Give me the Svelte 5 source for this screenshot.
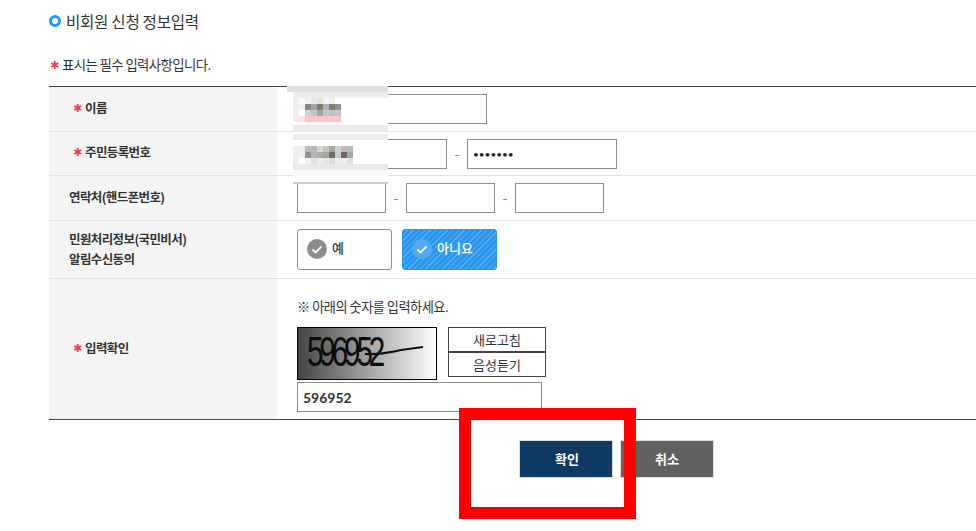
<script>
  const m1 = [
    ['#fafafa','#f0eef0','#eceae8','#e6e2de','#f2f2f4','#eef0f0','#ffffff'],
    ['#f4f0f0','#8a8a82','#a4a4a0','#807c78','#b0b4b8','#857d6c','#8a949c'],
    ['#ffffff','#d0d0ce','#c0c4c6','#a8a49a','#c2c6ca','#bcc0c4','#c0c4c8'],
    ['#ffe0e0','#ffc4c4','#ffc4c4','#ffc4c4','#ffc4c4','#ffc4c4','#ffc4c4']
  ].flat();
  const m2 = [
    ['#f0ece4','#b4bcc0','#bcb8b8','#d8d8d4','#c4c4bc','#a4a4a4','#ccd0d4','#bcb8b8','#b4bcc0'],
    ['#f4f0ec','#8c9498','#b8b4b4','#a8b0b0','#a8a498','#6c6c70','#c8ccd0','#706868','#a4acb0'],
    ['#ffffff','#f0f2f4','#e4e0e0','#eceeee','#e8e8e8','#dcdcdc','#eceeee','#f0f0f0','#dde0e2']
  ].flat();
</script>

<main class="page">
  <h2 class="title"><span class="ring"></span>비회원 신청 정보입력</h2>
  <p class="note"><span class="star">✱</span>표시는 필수 입력사항입니다.</p>

  <table>
    <tbody>
      <tr class="r1">
        <th class="req"><span class="star">✱</span>이름</th>
        <td><input class="w190" /></td>
      </tr>
      <tr class="r2">
        <th class="req"><span class="star">✱</span>주민등록번호</th>
        <td>
          <div class="fields wide">
            <input class="w150" /><span class="dash">-</span><input class="w150 pw" value="•••••••" />
          </div>
        </td>
      </tr>
      <tr class="r3">
        <th>연락처(핸드폰번호)</th>
        <td>
          <div class="fields">
            <input class="w89" /><span class="dash">-</span><input class="w89" /><span class="dash">-</span><input class="w89" />
          </div>
        </td>
      </tr>
      <tr class="r4">
        <th class="two">민원처리정보(국민비서)<br />알림수신동의</th>
        <td>
          <div class="radios">
            <div class="radio">
              <svg width="20" height="20" viewBox="0 0 20 20"><circle cx="10" cy="10" r="10" fill="#8c8c8c" /><path d="M5.5 10.5l3 3 6-6" fill="none" stroke="#fff" stroke-width="1.8" /></svg>
              <span>예</span>
            </div>
            <div class="radio on">
              <svg width="20" height="20" viewBox="0 0 20 20"><circle cx="10" cy="10" r="10" fill="#52aaf6" /><path d="M5.5 10.5l3 3 6-6" fill="none" stroke="#fff" stroke-width="1.8" /></svg>
              <span>아니요</span>
            </div>
          </div>
        </td>
      </tr>
      <tr class="r5">
        <th class="req"><span class="star">✱</span>입력확인</th>
        <td>
          <p class="hint">※ 아래의 숫자를 입력하세요.</p>
          <div class="captcha-row">
            <div class="captcha">
              <span class="digits">596952</span>
              <svg class="scribble" width="140" height="53" viewBox="0 0 140 53"><path d="M68 27c14 1 24-1 36-4l22-3" fill="none" stroke="#111" stroke-width="2.2" /></svg>
            </div>
            <div class="cap-btns">
              <button>새로고침</button>
              <button>음성듣기</button>
            </div>
          </div>
          <input class="answer" value="596952" />
        </td>
      </tr>
    </tbody>
  </table>

  <div class="actions">
    <button class="ok">확인</button>
    <button class="cancel">취소</button>
  </div>

  <div class="blur b1">
    <div class="grid g1">
      {#each m1 as c}<i style="background:{c}"></i>{/each}
    </div>
  </div>
  <div class="blur b2">
    <div class="grid g2">
      {#each m2 as c}<i style="background:{c}"></i>{/each}
    </div>
  </div>
  <div class="redbox"></div>
</main>

<style>
  :global(body) {
    margin: 0;
    background: #fff;
  }
  .page {
    position: relative;
    width: 976px;
    height: 531px;
    overflow: hidden;
    box-sizing: border-box;
    padding: 0 0 0 49px;
    font-family: "Noto Sans CJK KR", "Noto Sans", sans-serif;
    color: #333;
  }
  .title {
    display: flex;
    align-items: center;
    gap: 5px;
    margin: 0;
    height: 42px;
    font-size: 15.6px;
    font-weight: 400;
    letter-spacing: -0.3px;
    color: #333;
  }
  .ring {
    width: 12px;
    height: 12px;
    box-sizing: border-box;
    border: 3px solid #2196f3;
    border-radius: 50%;
  }
  .note {
    margin: 0;
    height: 44px;
    padding-top: 13px;
    box-sizing: border-box;
    font-size: 13.4px;
    line-height: 18px;
    letter-spacing: -0.6px;
    color: #333;
  }
  .star {
    display: inline-block;
    color: #f0404f;
    font-weight: 400;
    width: 10px;
    font-family: "DejaVu Sans", sans-serif;
    font-size: 11px;
    line-height: 12px;
    letter-spacing: 0;
    vertical-align: 1px;
    margin-left: 1px;
    margin-right: 2px;
  }
  table {
    width: 927px;
    border-collapse: collapse;
    border-top: 1px solid #444;
    border-bottom: 1px solid #444;
  }
  tr {
    border-bottom: 1px solid #e2e2e2;
  }
  tr:last-child {
    border-bottom: 0;
  }
  th {
    width: 228px;
    box-sizing: border-box;
    padding: 0 0 2px 20px;
    background: #f4f4f4;
    text-align: left;
    font-size: 12.5px;
    font-weight: 700;
    letter-spacing: -0.6px;
    line-height: 20px;
    color: #333;
  }
  th.req {
    padding: 0 0 3px 23px;
  }
  td {
    padding: 0 0 0 20px;
  }
  .r1 { height: 45px; }
  .r2 { height: 44px; }
  .r3 { height: 45px; }
  .r4 { height: 58px; }
  .r5 { height: 141px; }
  .r5 td {
    vertical-align: top;
    padding-top: 18px;
  }
  input {
    display: block;
    box-sizing: border-box;
    height: 30px;
    border: 1px solid #8c8c8c;
    border-radius: 0;
    background: #fff;
    padding: 0 5px;
    margin: 0;
    font-family: Lato, sans-serif;
    color: #333;
  }
  .w190 { width: 190px; }
  .w150 { width: 150px; }
  .w89 { width: 89px; }
  .pw {
    font-size: 10px;
    color: #222;
  }
  .fields {
    display: flex;
    align-items: center;
  }
  .dash {
    width: 20px;
    text-align: center;
    color: #888;
    font-size: 15px;
    line-height: 20px;
  }
  .radios {
    display: flex;
    gap: 10px;
    padding-bottom: 1px;
  }
  .radio {
    width: 95px;
    height: 41px;
    box-sizing: border-box;
    display: flex;
    align-items: center;
    gap: 5px;
    padding-left: 9px;
    border: 1px solid #8c8c8c;
    border-radius: 3px;
    background: #fff;
    font-size: 13px;
    font-weight: 500;
    color: #333;
  }
  .radio span {
    position: relative;
    top: -2px;
  }
  .radio.on {
    border-color: #2a96f0;
    color: #fff;
    background: repeating-linear-gradient(135deg, #2a96f0 0 3px, #5cb0f6 3px 4px);
  }
  .hint {
    margin: 0 0 10px;
    font-size: 13.2px;
    line-height: 20px;
    letter-spacing: -0.5px;
    color: #333;
  }
  .captcha-row {
    display: flex;
    gap: 11px;
    align-items: flex-start;
  }
  .captcha {
    position: relative;
    width: 140px;
    height: 53px;
    box-sizing: border-box;
    border: 1px solid #000;
    background: linear-gradient(90deg, #444 0%, #fff 100%);
    overflow: hidden;
  }
  .digits {
    position: absolute;
    left: 9px;
    top: -1px;
    font-family: "Liberation Sans", sans-serif;
    font-size: 43px;
    line-height: 48px;
    letter-spacing: -6px;
    color: #0c0c0c;
    transform: scaleX(0.69);
    transform-origin: 0 0;
  }
  .scribble {
    position: absolute;
    left: -1px;
    top: -1px;
  }
  .cap-btns {
    display: flex;
    flex-direction: column;
  }
  .cap-btns button {
    width: 98px;
    height: 25px;
    box-sizing: border-box;
    padding: 0;
    border: 1px solid #444;
    background: #fff;
    font-family: inherit;
    font-size: 13px;
    line-height: 1;
    color: #333;
  }
  .answer {
    width: 245px;
    margin-top: 2px;
    font-size: 14px;
    font-weight: 700;
  }
  .actions {
    display: flex;
    gap: 7px;
    padding: 20px 0 0 470px;
  }
  .actions button {
    width: 94px;
    height: 38px;
    box-sizing: border-box;
    padding: 0 0 2px 2px;
    border: 1px solid #ddd;
    color: #fff;
    font-family: inherit;
    font-size: 13px;
    font-weight: 700;
  }
  .ok { background: #0f3a64; }
  .actions .cancel {
    background: #616161;
    padding-left: 0;
  }
  .blur {
    position: absolute;
    box-sizing: border-box;
    width: 95px;
    left: 293px;
  }
  .b1 {
    top: 92px;
    height: 39px;
    background: #fff;
    border-top: 6px solid #ececec;
    border-bottom: 6px solid #eaeaea;
  }
  .b1::before {
    content: "";
    position: absolute;
    left: -6px;
    top: -12px;
    width: 101px;
    height: 6px;
    background: #e0e0e0;
  }
  .b2 {
    top: 134px;
    height: 42px;
    background: #fff;
    border-top: 6px solid #ececec;
    border-bottom: 6px solid #fafafa;
    box-shadow: inset 0 -6px 0 #e9e9e9;
  }
  .b2::after {
    content: "";
    position: absolute;
    left: 0;
    bottom: -14px;
    width: 95px;
    height: 2px;
    background: #cccccc;
  }
  .grid {
    display: grid;
    grid-auto-rows: 6px;
    border-left: 6px solid #eee;
    box-sizing: content-box;
    position: absolute;
    left: 0;
  }
  .g1 {
    top: 0;
    grid-template-columns: repeat(7, 6px);
    height: 24px;
  }
  .g2 {
    top: 6px;
    grid-template-columns: repeat(9, 6px);
    height: 18px;
  }
  .grid i {
    display: block;
    width: 6px;
    height: 6px;
  }
  .redbox {
    position: absolute;
    left: 459px;
    top: 408px;
    width: 177px;
    height: 111px;
    box-sizing: border-box;
    border: 12px solid #f00;
  }
</style>
